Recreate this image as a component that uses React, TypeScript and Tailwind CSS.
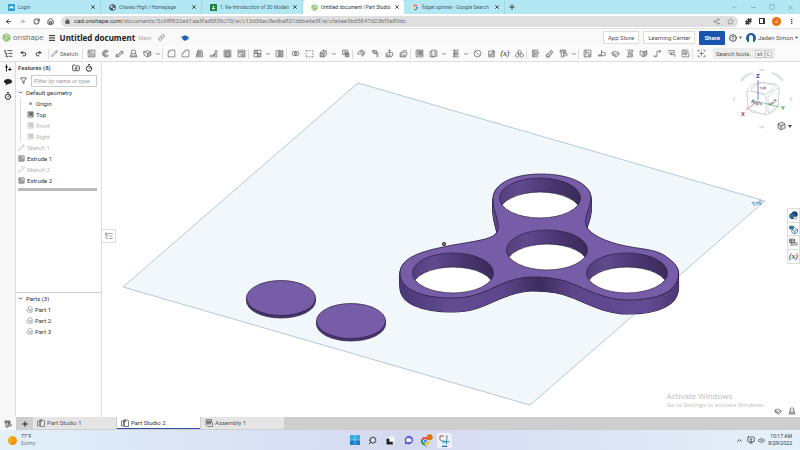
import React, { useState } from 'react';
import {
  ArrowLeft,
  ArrowRight,
  ChevronDown,
  ChevronUp,
  CircleHelp,
  Filter,
  FolderPlus,
  GraduationCap,
  House,
  Link,
  Lock,
  Menu,
  Minus,
  MoreVertical,
  Pencil,
  Plus,
  Puzzle,
  Redo2,
  RotateCw,
  Search,
  Share2,
  Square,
  Star,
  Timer,
  Undo2,
  X,
  Volume2,
  MonitorDown,
  MessageCircle,
} from 'lucide-react';

// Toolbar glyphs on a 16x16 grid: [outline, shaded area]
const glyphs: Record<string, [string, string]> = {
  extrude: ['M2 2h12v12H2zM5 5h6M2 5h3v9', 'M6 7h7v6H6z'],
  revolve: ['M13 4A6 6 0 1 0 13 12M13 4l-3 2M13 12l-3-2M10 6a3 3 0 1 0 0 4', 'M4 5l4-3 5 2-3 2-3 2 3 3-3 3-4-3z'],
  sweep: ['M2 14v-4h4c3 0 2-6 5-6h3v4h-3c-2 0-2 6-5 6z', 'M2 10h4v4H2zM11 4h3v4h-3z'],
  loft: ['M5 2h6l1 6 2 6H2l2-6zM4 8h8', 'M3 10h10l1 4H2z'],
  thicken: ['M1 5l6-2 7 2v6l-6 3-6-3zM1 5l7 3 6-3M8 8v6', 'M8 8l6-3v6l-6 3z'],
  fillet: ['M2 14V7c0-3 2-5 5-5h7v12z', 'M2 7c0-3 2-5 5-5v2C5 4 4 5 4 7z'],
  chamfer: ['M2 14V8l6-6h6v12z', 'M2 8l6-6 1 2-5 5z'],
  draft: ['M5 2h7l2 12H2zM4 6h9M3 10h10', 'M5 3h5l1 10H3z'],
  rib: ['M2 14h12V3h-3v4l-4 4H2zM7 11h4V7', 'M7 11l4-4v5H7z'],
  shell: ['M2 2h12v12H2zM5 5h6v9H5z', 'M3 3h10v10H3z'],
  hole: ['M2 2h12v12H2zM11 8a3 3 0 1 1-6 0 3 3 0 0 1 6 0M2 5h12', 'M8 8h6v6H8z'],
  pattern: ['M2 2h12v12H2zM2 8h12M8 2v12', 'M2 2h6v6H2zM8 8h6v6H8z'],
  mirror: ['M2 3h4v11H2zM10 3h4v11h-4zM8 1v14', 'M10 3h4v11h-4z'],
  boolean: ['M10 8a4 4 0 1 1-8 0 4 4 0 0 1 8 0M14 8a4 4 0 1 1-8 0 4 4 0 0 1 8 0', 'M8 4a5 5 0 0 1 0 8 5 5 0 0 1 0-8'],
  split: ['M2 5V3h3M7 3h3M12 3h2v2M14 7v3M14 12v2h-3M9 14H6M4 14H2v-3M2 9V7', ''],
  transform: ['M2 7h7v7H2zM9 7l4-3v7l-4 3M2 7l4-4h7M8 1v4', 'M2 7h7v7H2z'],
  wrap: ['M3 2h9v8H3zM5 5h5M5 7h5M8 7h6v7H8z', 'M8 7h6v7H8z'],
  surface: ['M1 9c3-8 9-8 13-3l-4 7c-2-4-5-5-9-4zM5 5c3 1 5 3 6 6', 'M5 5c4 0 6 3 6 6l3-5c-3-3-6-3-9-1z'],
  remove: ['M2 3h8l2 5H5zM9 9l5 5M14 9l-5 5', 'M2 3h8l2 5H5z'],
  moveFace: ['M2 8l4-2h7l1 5-3 3H2zM8 8V1M6 3l2-2 2 2', 'M2 9h9v5H2z'],
  replace: ['M2 8c3-4 7-6 12-5M2 8v6h10l2-5V6c-4-1-7 0-12 2', 'M2 9h10v5H2z'],
  offset: ['M2 2h12v12H2zM5 2v9h9M8 5h3v3H8z', 'M5 2h9v9H5z'],
  copy: ['M5 2h7l2 3v8H5zM5 4H2v10h8', 'M9 3h4v9H9z'],
  plane: ['M3 2h11M3 8h11M3 14h11M6 2v12', 'M5 3h8v4H5zM4 9h9v4H4z'],
  helix: ['M14 8A6 6 0 1 1 2 8a6 6 0 0 1 12 0M4 4l8 8', ''],
  curve: ['M3 4h10v10H3zM4 12c1-5 4-1 8-7M9 1l4 3-3 3', 'M4 12c2-5 4-1 8-7v8H4z'],
  composite: ['M8 2l3 2v3L8 9 5 7V4zM4 8l3 2v3l-3 2-3-2v-3zM12 8l3 2v3l-3 2-3-2v-3z', 'M5 4l3 2v3L5 7z'],
  sheet: ['M13 2H3v12h10M5 5h8v3H6v3h7', 'M3 2h3v12H3z'],
  bend: ['M2 12l4-4 5-6 3 3-4 6-5 3zM8 12a3 3 0 1 1-6 0 3 3 0 0 1 6 0', 'M8 6l3-3 2 3-3 4z'],
  flange: ['M2 2h10v4H8v8H4V6H2zM8 8h6v4h-6', 'M3 2h8v4H3z'],
  table: ['M2 2h12v12H2zM5 2v12M5 6h6M8 8l3 3', 'M9 8h5v6H9z'],
  hem: ['M2 12h10a3 3 0 0 0 0-6H8M8 2v10', 'M2 9h7v4H2z'],
  tab: ['M2 6l5-2 7 3-5 3zM2 6v4l7 4 5-4V7', 'M2 8l7 3v3l-7-4z'],
  form: ['M3 2h11v3H8v3h5v6H3M6 5v9', 'M8 9h5v4H8z'],
  corner: ['M2 3l5 2v9l-5-4zM14 3L9 5v9l5-4zM7 5h2', 'M9 5l5-2v7l-5 4z'],
  joint: ['M2 13h5V4h7M11 2l3 2-3 3M3 11l-1 2 2 2', ''],
  unfold: ['M2 3h11v4H2M5 10h9v4M8 7v3', ''],
  finish: ['M12 2H2v12h12V7M5 7l3 4 6-8', 'M3 3h8v7H3z'],
  custom: ['M2 5V2h3M11 2h3v3M14 11v3h-3M5 14H2v-3M8 4v8M4 8h8M8 1v1M8 14v1', ''],
  tree: ['M1 3h3M6 3h9M3 8h3M8 8h7M3 13h3M8 13h7M1 3l5 12', ''],
  list: ['M1 2h3v3H1zM6 3h9M3 8h3M8 8h7M3 13h3M8 13h7M2 5v8', ''],
  part: ['M2 9l3-2V3l5-2 4 3v10H5l-3-2zM5 7l4 2v4M9 9h5', ''],
  studio: ['M1 4h4v10H1zM7 2h6l2 2v11H7zM4 2h5v4', ''],
  assembly: ['M2 1h11v4l2 2v8H5l-3-3zM4 4h7v6H4zM11 4l4 3M4 7h7', 'M4 4h7v6H4z'],
};

const toolGroups: string[][] = [
  ['extrude', 'revolve', 'sweep', 'loft', 'thicken', 'v'],
  ['fillet', 'chamfer', 'draft', 'rib', 'shell', 'hole'],
  ['pattern', 'v', 'mirror'],
  ['boolean', 'split', 'transform', 'v', 'wrap'],
  ['surface', 'remove', 'moveFace', 'replace'],
  ['offset', 'copy', 'v', 'plane', 'v', 'helix', 'curve', 'variable', 'composite'],
  ['sheet', 'bend', 'flange', 'v'],
  ['table', 'hem', 'tab', 'form', 'corner', 'joint', 'unfold', 'finish'],
  ['custom'],
];

const Glyph: React.FC<{ name: string; className?: string }> = ({ name, className = 'size-[9px]' }) => (
  <svg viewBox="0 0 16 16" className={className} fill="none" stroke="currentColor" strokeWidth="1.3" aria-hidden="true">
    <path d={glyphs[name][1]} fill="currentColor" fillOpacity="0.45" stroke="none" />
    <path d={glyphs[name][0]} />
  </svg>
);

const browserTabs = [
  { title: 'Login', icon: 'login' },
  { title: 'Chaves High / Homepage', icon: 'globe' },
  { title: '1. Re-Introduction of 3D Modeli', icon: 'class' },
  { title: 'Untitled document | Part Studio', icon: 'onshape' },
  { title: 'fidget spinner - Google Search', icon: 'google' },
];

const OnshapeLogo: React.FC<{ className: string }> = ({ className }) => (
  <svg viewBox="0 0 16 16" className={className} fill="none" stroke="#6fb245" strokeWidth="1.5" aria-hidden="true">
    <path d="M8 1l6 3.5v7L8 15l-6-3.5v-7z" fill="#d6edc8" />
    <path d="M8 5l3 1.600v3.200L8 11.500 5 9.800V6.600zM2 4.500l5 2M14 11.500l-5-2M8 15v-4" />
  </svg>
);

const Favicon: React.FC<{ icon: string }> = ({ icon }) => {
  if (icon === 'onshape') return <OnshapeLogo className="size-[7px] shrink-0" />;
  return (
    <svg viewBox="0 0 16 16" className="size-[7px] shrink-0" aria-hidden="true">
      {icon === 'login' && (
        <>
          <rect width="16" height="16" rx="2" fill="#2a9fd0" />
          <path d="M3 11V7l5-3 5 3v4l-5-2z" fill="#dff4fc" />
        </>
      )}
      {icon === 'globe' && (
        <>
          <circle cx="8" cy="8" r="7.500" fill="#46565f" />
          <path d="M3 4l4-1 2 3-3 3-3-2zM9 8l5 1-3 5-2-2z" fill="#dcebf0" />
        </>
      )}
      {icon === 'class' && (
        <>
          <rect width="16" height="16" rx="1" fill="#188038" />
          <circle cx="8" cy="6" r="2" fill="#fff" />
          <path d="M4 12c0-4 8-4 8 0z" fill="#fff" />
        </>
      )}
      {icon === 'google' && (
        <g fill="none" strokeWidth="3">
          <circle cx="8" cy="8" r="8" fill="#fff" />
          <path d="M12 4.500A5 5 0 0 0 4 5" stroke="#ea4335" />
          <path d="M4 5a5 5 0 0 0 0 6" stroke="#fbbc05" />
          <path d="M4 11a5 5 0 0 0 7 1" stroke="#34a853" />
          <path d="M11 12a5 5 0 0 0 2-4H8" stroke="#4285f4" />
        </g>
      )}
    </svg>
  );
};

const BrowserChrome: React.FC = () => (
  <header>
    <div className="flex h-[14px] items-center bg-[#b3e7f4] text-[#41636e]">
      {browserTabs.map((tab) => {
        const active = tab.icon === 'onshape';
        return (
          <div
            key={tab.title}
            className={`flex h-full w-[101px] items-center gap-[3px] pr-1 pl-2 ${active ? 'rounded-t-[3px] bg-white text-[#333]' : 'border-r border-[#a1d5e2]'}`}
          >
            <Favicon icon={tab.icon} />
            <span className="flex-1 text-[5px] whitespace-nowrap">{tab.title}</span>
            <button aria-label={`Close ${tab.title}`}>
              <X className="size-[6px] text-[#222]" strokeWidth={3} />
            </button>
          </div>
        );
      })}
      <button aria-label="New tab" className="ml-[3px]">
        <Plus className="size-[8px] text-[#222]" strokeWidth={2.5} />
      </button>
      <div className="ml-auto flex gap-3 pr-[6px] text-[#668f9a]">
        <button aria-label="Tab search"><ChevronDown className="size-[7px]" /></button>
        <button aria-label="Minimize"><Minus className="size-[7px]" /></button>
        <button aria-label="Restore"><Square className="size-[6px]" /></button>
        <button aria-label="Close window"><X className="size-[7px]" /></button>
      </div>
    </div>
    <div className="flex h-[15px] items-center gap-[7px] border-b border-[#e2e2e2] bg-white px-[5px] text-[#333]">
      <button aria-label="Back"><ArrowLeft className="size-[7px]" strokeWidth={3} /></button>
      <button aria-label="Forward" className="text-[#999]"><ArrowRight className="size-[7px]" strokeWidth={2.5} /></button>
      <button aria-label="Reload"><RotateCw className="size-[7px]" strokeWidth={3} /></button>
      <button aria-label="Home"><House className="size-[7px]" strokeWidth={3} /></button>
      <div className="flex h-[11px] flex-1 items-center gap-1 rounded-full bg-[#dfdfdf] px-1 text-[#777]">
        <Lock className="size-[5px] fill-[#555] text-[#555]" strokeWidth={3} />
        <span className="flex-1 whitespace-nowrap">
          <span className="text-[#333]">cad.onshape.com</span>
          /documents/5c98f832e61aa3fad5f39c70/w/c13d36ec8edba831dbbe6e5f/e/cfa6ee3bd5847d23bf5a89dc
        </span>
        <button aria-label="Share page"><Share2 className="size-[7px]" /></button>
        <button aria-label="Bookmark" className="ml-[3px]"><Star className="size-[7px]" /></button>
      </div>
      <button aria-label="Extensions"><Puzzle className="size-[7px] fill-[#333]" /></button>
      <button aria-label="Side panel" className="size-[6px] border border-r-2 border-[#333]" />
      <button aria-label="Profile" className="size-[9px] rounded-full bg-[#e8710a] text-[5px] leading-[9px] text-white">J</button>
      <button aria-label="More"><MoreVertical className="size-[7px]" strokeWidth={3} /></button>
    </div>
  </header>
);

const Caret: React.FC = () => (
  <svg viewBox="0 0 8 8" className="size-[3px]" aria-hidden="true"><path d="M0 2h8L4 7z" fill="#444" /></svg>
);

const DocumentHeader: React.FC = () => (
  <div className="flex h-[17px] items-center bg-[#f9f9f9] px-[2px] text-[#555]">
    <OnshapeLogo className="size-[9px]" />
    <span className="ml-[2px] text-[8px] text-[#777]">onshape</span>
    <button aria-label="Main menu" className="mr-1 ml-[4px]"><Menu className="size-[8px] text-[#222]" strokeWidth={3} /></button>
    <h1 className="font-['Noto_Sans',sans-serif] text-[8px] font-bold text-[#222]">Untitled document</h1>
    <span className="ml-[3px] text-[6px] text-[#aaa]">Main</span>
    <button aria-label="Copy link" className="ml-[7px]"><Link className="size-[7px]" /></button>
    <GraduationCap className="ml-4 size-[8px] fill-[#1b5faa] text-[#1b5faa]" />
    <div className="ml-auto flex items-center gap-1">
      <button className="h-[13px] rounded-[1px] border border-[#ddd] bg-white px-1">App Store</button>
      <button className="h-[13px] rounded-[1px] border border-[#ddd] bg-white px-1">Learning Center</button>
      <button className="h-[14px] rounded-[1px] bg-[#1b54b0] px-[5px] font-bold text-white">Share</button>
      <button aria-label="Help" className="flex items-center gap-[2px]">
        <CircleHelp className="size-[8px]" strokeWidth={3} />
        <Caret />
      </button>
      <button className="flex items-center gap-[2px] whitespace-nowrap">
        <svg viewBox="0 0 20 20" className="size-[10px]" aria-hidden="true">
          <circle cx="10" cy="10" r="10" fill="#1c5ea8" />
          <path d="M6 20V9c0-7 8-7 8 0v11z" fill="#fff" />
        </svg>
        Jaden Simon
        <Caret />
      </button>
    </div>
  </div>
);

const Toolbar: React.FC = () => (
  <div className="flex h-[16px] items-center border-b border-[#ddd] bg-[#fbfbfb] text-[#666]">
    <button aria-label="Feature list" className="flex w-4 justify-center text-[#222]"><Glyph name="tree" /></button>
    <button aria-label="Undo" className="flex w-[15px] justify-center"><Undo2 className="size-[7px] text-[#222]" strokeWidth={3} /></button>
    <button aria-label="Redo" className="flex w-[15px] justify-center"><Redo2 className="size-[7px] text-[#222]" strokeWidth={3} /></button>
    <div className="mx-[2px] h-[10px] w-px bg-[#ddd]" />
    <button className="flex w-[31px] items-center gap-[2px]"><Pencil className="size-[7px]" />Sketch</button>
    {toolGroups.map((group, g) => (
      <div key={g} className="flex items-center">
        <div className="mr-px h-[10px] w-px bg-[#ddd]" />
        {group.map((tool, i) => {
          if (tool === 'v') {
            return <button key={i} aria-label="More tools" className="flex w-2 justify-center"><ChevronDown className="size-[6px]" strokeWidth={3} /></button>;
          }
          return (
            <button key={i} aria-label={tool} className="flex w-[14px] justify-center">
              {tool === 'variable' ? <i className="font-['Liberation_Serif',serif] text-[8px] font-bold">(x)</i> : <Glyph name={tool} />}
            </button>
          );
        })}
      </div>
    ))}
    <label className="ml-[5px] flex h-[11px] items-center gap-1 bg-[#ececec] px-[3px]">
      <input type="text" aria-label="Search tools" placeholder="Search tools..." className="w-[35px] bg-transparent outline-none placeholder:text-[#555]" />
      <kbd className="border border-[#ccc] bg-[#f4f4f4] px-px font-['Roboto',sans-serif] text-[5px] leading-[6px]">alt</kbd>
      <kbd className="-ml-1 border border-[#ccc] bg-[#f4f4f4] px-px font-['Roboto',sans-serif] text-[5px] leading-[6px]">C</kbd>
    </label>
  </div>
);

const features = [
  { name: 'Origin', icon: 'origin', nested: true, hidden: false },
  { name: 'Top', icon: 'offset', nested: true, hidden: false },
  { name: 'Front', icon: 'offset', nested: true, hidden: true },
  { name: 'Right', icon: 'offset', nested: true, hidden: true },
  { name: 'Sketch 1', icon: 'sketch', nested: false, hidden: true },
  { name: 'Extrude 1', icon: 'extrude', nested: false, hidden: false },
  { name: 'Sketch 2', icon: 'sketch', nested: false, hidden: true },
  { name: 'Extrude 2', icon: 'extrude', nested: false, hidden: false },
];

const FeaturePanel: React.FC = () => {
  const [filter, setFilter] = useState('');

  const visible = features.filter((f) => f.name.toLowerCase().includes(filter.toLowerCase()));

  return (
    <aside className="flex w-[86px] shrink-0 flex-col border-r border-[#ddd] bg-white text-[#333]">
      <div className="flex flex-1 flex-col border-b border-[#ccc]">
        <div className="flex h-[12px] items-center pr-2 pl-[2px]">
          <span className="flex-1 font-bold text-[#555]">Features (8)</span>
          <button aria-label="Add folder"><FolderPlus className="size-[8px]" strokeWidth={2.5} /></button>
          <button aria-label="Rebuild times" className="ml-[5px]"><Timer className="size-[8px]" strokeWidth={3} /></button>
        </div>
        <div className="flex h-[13px] items-center gap-1 pr-1 pl-[4px]">
          <Filter className="size-[7px]" strokeWidth={2.5} />
          <input
            type="text"
            aria-label="Filter by name or type"
            placeholder="Filter by name or type"
            value={filter}
            onChange={(e) => setFilter(e.target.value)}
            className="h-[12px] min-w-0 flex-1 border border-[#ccc] px-[2px] outline-none placeholder:text-[#999] placeholder:italic"
          />
        </div>
        <button className="flex h-[11px] items-center gap-[3px] pl-[2px]">
          <ChevronDown className="size-[5px]" strokeWidth={4} />
          Default geometry
        </button>
        <ul>
          {visible.map((f) => (
            <li
              key={f.name}
              className={`flex h-[11px] items-center gap-[2px] ${f.nested ? 'ml-[4px] border-l border-[#ddd] pl-[6px]' : 'pl-[2px]'} ${f.hidden ? 'text-[#b5b5b5]' : ''}`}
            >
              {f.icon === 'origin' && <span className="mx-[2px] size-[3px] rounded-full bg-[#999]" />}
              {f.icon === 'sketch' && <Pencil className="size-[7px]" />}
              {f.icon !== 'origin' && f.icon !== 'sketch' && <Glyph name={f.icon} className="size-[7px]" />}
              {f.name}
            </li>
          ))}
        </ul>
        <div className="mt-[2px] mr-1 ml-[2px] h-[3px] bg-[#bbb]" />
      </div>
      <div className="h-[124px]">
        <button className="flex h-[11px] items-center gap-[3px] pl-[2px]">
          <ChevronDown className="size-[5px]" strokeWidth={4} />
          Parts (3)
        </button>
        <ul>
          {['Part 1', 'Part 2', 'Part 3'].map((part) => (
            <li key={part} className="flex h-[11px] items-center gap-[2px] pl-[10px]">
              <Glyph name="part" className="size-[7px] text-[#777]" />
              {part}
            </li>
          ))}
        </ul>
      </div>
    </aside>
  );
};

// Top face outline of the spinner, the walls are the same outline pushed down
const SPINNER =
  'M400 273C400 257 424 251 443 247C466 242 484 241 493 236C501 231 498 223 496 215C494 208 493 204 493 198C494 183 514 174 541 174C570 174 591 184 591 198C591 206 586 213 585.500 221C585 232 600 239 617 244C640 250 657 248 668 258C675 263 679 268 678.500 274C678 292 657 300 628 300C605 300 586 289 573 284C562 279 548 277 533 277C519 277 508 281 495 287C482 293 471 298 453 298C420 298 400 289 400 273Z';
const holes = [
  { id: 'top', cx: 540, cy: 198 },
  { id: 'mid', cx: 547, cy: 250 },
  { id: 'left', cx: 453, cy: 273 },
  { id: 'right', cx: 627, cy: 273 },
];
const walls = [14, 12, 10, 8, 6, 4, 2, 1];

const Scene: React.FC = () => (
  <svg viewBox="102 62 698 355" className="absolute inset-0 size-full" role="img" aria-label="Fidget spinner model">
    <defs>
      <linearGradient id="wall" gradientUnits="userSpaceOnUse" x1="400" y1="0" x2="679" y2="0">
        <stop offset="0" stopColor="#4b3875" />
        <stop offset="0.190" stopColor="#644c94" />
        <stop offset="0.370" stopColor="#5c458a" />
        <stop offset="0.500" stopColor="#3b2c5c" />
        <stop offset="0.620" stopColor="#5c458a" />
        <stop offset="0.880" stopColor="#644c94" />
        <stop offset="1" stopColor="#4b3875" />
      </linearGradient>
      <linearGradient id="bore">
        <stop offset="0" stopColor="#54407c" />
        <stop offset="0.250" stopColor="#5f4a8e" />
        <stop offset="0.650" stopColor="#49366f" />
        <stop offset="1" stopColor="#3a2b59" />
      </linearGradient>
      {holes.map((h) => (
        <clipPath id={h.id} key={h.id}>
          <ellipse cx={h.cx} cy={h.cy} rx="40.500" ry="20" />
        </clipPath>
      ))}
    </defs>
    <path d="M358 83L765 201L530 405L123 287Z" fill="#f2f7fb" stroke="#b3c9da" strokeWidth="1" />
    <text x="753" y="207" fontSize="6" fill="#2f6195" transform="rotate(-24 753 207)">Top</text>

    {[[281, 298], [351, 321]].map(([x, y]) => (
      <g key={x} stroke="#2b2044" strokeWidth="0.700">
        <path d={`M${x - 34.5} ${y}v3a34.500 17 0 0 0 69 0v-3z`} fill="#46346b" />
        <ellipse cx={x} cy={y} rx="34.500" ry="17.500" fill="#775da8" />
      </g>
    ))}

    {walls.map((dy) => (
      <path key={dy} d={SPINNER} transform={`translate(0 ${dy})`} fill="none" stroke="#2b2044" strokeWidth="1.200" />
    ))}
    {walls.map((dy) => (
      <path key={dy} d={SPINNER} transform={`translate(0 ${dy})`} fill="url(#wall)" />
    ))}
    <path d={SPINNER} fill="#775da8" stroke="#2b2044" strokeWidth="0.800" />
    {holes.map((h) => (
      <g key={h.id}>
        <ellipse cx={h.cx} cy={h.cy} rx="40.500" ry="20" fill="url(#bore)" />
        <ellipse cx={h.cx} cy={h.cy + 14} rx="40.500" ry="20" fill="#fff" stroke="#2b2044" strokeWidth="0.700" clipPath={`url(#${h.id})`} />
        <ellipse cx={h.cx} cy={h.cy} rx="40.500" ry="20" fill="none" stroke="#2b2044" strokeWidth="0.700" />
      </g>
    ))}
    <circle cx="444" cy="244" r="1.700" fill="#777" stroke="#222" strokeWidth="0.800" />

    {/* View cube */}
    <g fill="#dfe3e6">
      <path d="M762 68l4 3h-8zM762 129l4-3h-8zM732 99l3-3v6zM793 99l-3-3v6z" />
      <path d="M740 80q5-7 12-8l1 2q-7 2-11 8zM784 80q-5-7-12-8l-1 2q7 2 11 8z" />
    </g>
    <g fill="#fff" stroke="#d3d8dc" strokeWidth="1" strokeLinejoin="round">
      <path d="M747 90L751 86L760 82L775 84L779 87L778 106L774 111L767 115L752 112L748 109Z" />
      <path d="M751 89L760 83L776 85L770 92L766 94L752 91Z" />
      <path d="M747 92L750 91L764 95L766 97V113L763 114L750 110L748 108Z" />
      <path d="M768 97L777 88L779 89L778 105L769 113L768 112Z" />
    </g>
    <path d="M758 100V80" stroke="#5c62c4" strokeWidth="0.800" />
    <path d="M758 101l-12 9" stroke="#d37777" strokeWidth="0.800" />
    <path d="M764 103l15 4" stroke="#74bf7c" strokeWidth="0.800" />
    <g fontSize="6" fontWeight="bold">
      <text x="756" y="78" fill="#4146b5">Z</text>
      <text x="741" y="116" fill="#cf3434">X</text>
      <text x="781" y="110" fill="#35a845">Y</text>
    </g>
    <g fontSize="4" fill="#333">
      <text x="751" y="103" fontSize="5" transform="rotate(12 751 103)">Right</text>
      <text x="770" y="106" transform="rotate(-38 770 106)">Back</text>
      <text x="760" y="90" transform="rotate(-14 760 90)">Top</text>
    </g>
    <g stroke="#555" strokeWidth="0.700">
      <path d="M778 124l4-2 3 2v4l-4 2-3-2z" fill="#ddd" />
      <path d="M778 124l3 2 4-2M781 126v4" fill="none" />
      <path d="M788 125h4l-2 3z" fill="#444" stroke="none" />
    </g>
  </svg>
);

const SideTools: React.FC = () => (
  <div className="absolute top-[146px] right-0 flex w-[13px] flex-col border border-[#ddd] bg-white text-[#555]">
    <button aria-label="Appearance" className="flex h-[14px] items-center justify-center border-b border-[#ddd]">
      <svg viewBox="0 0 16 16" className="size-[9px]" stroke="#23415e" aria-hidden="true">
        <circle cx="10" cy="6" r="5" fill="#174a7c" />
        <circle cx="6" cy="9" r="5" fill="#2f6799" />
        <path d="M8 10h6v3l-3 2-3-2z" fill="#eee" stroke="#777" />
      </svg>
    </button>
    <button aria-label="Configurations" className="flex h-[13px] items-center justify-center border-b border-[#ddd]">
      <svg viewBox="0 0 16 16" className="size-[9px]" fill="none" stroke="#39709e" strokeWidth="1.400" aria-hidden="true">
        <path d="M1 2h7v5H1z" fill="#39709e" />
        <path d="M10 5l5 3v5l-5 3-5-3V8zM5 8l5 3 5-3M10 11v5" fill="#fff" />
      </svg>
    </button>
    <button aria-label="Custom tables" className="flex h-[14px] items-center justify-center border-b border-[#ddd]">
      <svg viewBox="0 0 16 16" className="size-[9px]" fill="none" stroke="#555" strokeWidth="1.500" aria-hidden="true">
        <path d="M1 2h9v6H1zM1 5h9M4 2v12M7 9v5M13 8c2 2 2 4 0 6M9 9h3M9 12h3" />
      </svg>
    </button>
    <button aria-label="Variables" className="flex h-[13px] items-center justify-center font-['Liberation_Serif',serif] text-[8px] font-bold italic">(x)</button>
  </div>
);

const DocumentTabs: React.FC = () => {
  const [active, setActive] = useState('Part Studio 2');

  return (
    <nav className="flex h-[13px] items-stretch bg-[#cecece] text-[#555]">
      <button aria-label="Tab manager" className="flex w-4 items-center justify-center bg-[#f7f7f7] text-[#222]"><Glyph name="flange" className="size-[8px]" /></button>
      <button aria-label="Add tab" className="flex w-[17px] items-center justify-center"><Plus className="size-[8px] text-[#222]" strokeWidth={3} /></button>
      {['Part Studio 1', 'Part Studio 2', 'Assembly 1'].map((tab) => (
        <button
          key={tab}
          onClick={() => setActive(tab)}
          className={`mr-px mb-px flex w-[83px] items-center gap-[2px] pl-1 ${active === tab ? 'border-b border-[#2d4fae] bg-white text-[#333]' : 'bg-[#e5e5e5]'}`}
        >
          <Glyph name={tab === 'Assembly 1' ? 'assembly' : 'studio'} className="size-[8px]" />
          {tab}
        </button>
      ))}
    </nav>
  );
};

const Taskbar: React.FC = () => (
  <footer className="grid h-[20px] grid-cols-3 items-center bg-linear-to-r from-[#e2f0fa] via-[#d5d9f0] to-[#e5f1fa] px-2 font-['Open_Sans',sans-serif] text-[#333]">
    <div className="flex items-center gap-1">
      <span className="size-[9px] rounded-full bg-linear-to-br from-[#fbbd23] to-[#ee820b]" />
      <span className="text-[5px] leading-[7px]">77°F<br /><span className="text-[#666]">Sunny</span></span>
    </div>
    <div className="flex items-center justify-center gap-[3px]">
      <button aria-label="Start" className="flex size-[15px] items-center justify-center">
        <svg viewBox="0 0 16 16" className="size-[10px]" aria-hidden="true">
          <path d="M0 0h7.600v7.600H0zM8.400 0H16v7.600H8.400z" fill="#32abe0" />
          <path d="M0 8.400h7.600V16H0zM8.400 8.400H16V16H8.400z" fill="#1483cb" />
        </svg>
      </button>
      <button aria-label="Search" className="flex size-[15px] items-center justify-center"><Search className="size-[9px] -scale-x-100" strokeWidth={2.5} /></button>
      <button aria-label="Task view" className="flex size-[15px] items-center justify-center">
        <svg viewBox="0 0 16 16" className="size-[9px]" aria-hidden="true">
          <path d="M5 1h10v10H5z" fill="#f5f5f5" />
          <path d="M1 5h5v5h6v5H1z" fill="#222" />
        </svg>
      </button>
      <button aria-label="Chat" className="flex size-[15px] items-center justify-center">
        <svg viewBox="0 0 16 16" className="size-[10px]" aria-hidden="true">
          <path d="M8 1a7 7 0 1 1-4 13l-3 1 1-4A7 7 0 0 1 8 1z" fill="#5b5fc7" />
          <path d="M4 5h6v2l2-1v5l-2-1v1H4z" fill="#fff" />
        </svg>
      </button>
      <button aria-label="Chrome" className="flex size-[15px] items-center justify-center">
        <svg viewBox="0 0 20 20" className="size-[13px]" aria-hidden="true">
          <path d="M8 11L2 8a7 7 0 0 1 12 0z" fill="#db4437" />
          <path d="M8 11L2 8a7 7 0 0 0 6 10z" fill="#2b9c51" />
          <path d="M8 11h7a7 7 0 0 1-7 7z" fill="#f5bf24" />
          <circle cx="8" cy="11" r="3" fill="#4285f4" stroke="#fff" />
          <circle cx="15" cy="5" r="4.500" fill="#e8710a" />
          <path d="M8 19.500h3" stroke="#4a67c4" />
        </svg>
      </button>
      <button aria-label="Snipping tool" className="flex size-[15px] items-center justify-center rounded-[2px] bg-[#eef1fa]">
        <svg viewBox="0 0 20 20" className="size-[13px]" fill="none" strokeWidth="1.500" aria-hidden="true">
          <path d="M3 9V3h6" stroke="#b05340" />
          <path d="M12 3h2v5M3 9l6 3" stroke="#6f7c88" />
          <path d="M9 12h9M13 8v8" stroke="#2386c8" />
          <circle cx="9" cy="12" r="1.500" stroke="#3c9bd3" />
          <path d="M6 19h8" stroke="#1975bd" strokeWidth="2" />
        </svg>
      </button>
    </div>
    <div className="flex items-center justify-end gap-[3px]">
      <button aria-label="Hidden icons"><ChevronUp className="size-[7px]" strokeWidth={3} /></button>
      <MonitorDown className="ml-px size-[8px]" />
      <Volume2 className="size-[7px]" />
      <span className="text-right text-[5px] leading-[7px] text-[#222]">10:17 AM<br />8/29/2022</span>
    </div>
  </footer>
);

const App: React.FC = () => {
  return (
    <div className="flex min-h-screen flex-col bg-white font-['Roboto',sans-serif] text-[6px] leading-[8px]">
      <BrowserChrome />
      <DocumentHeader />
      <Toolbar />
      <main className="flex flex-1">
        <div className="flex w-4 shrink-0 flex-col items-center gap-[6px] border-r border-[#ddd] bg-[#f8f8f8] pt-[2px] text-[#222]">
          <button aria-label="Insert">
            <svg viewBox="0 0 16 16" className="size-[8px]" fill="none" stroke="currentColor" strokeWidth="2" aria-hidden="true">
              <path d="M5 1v14M2 6h6M12 7v7M8 11h7" />
            </svg>
          </button>
          <button aria-label="Comments">
            <svg viewBox="0 0 16 16" className="size-[8px]" fill="currentColor" aria-hidden="true">
              <path d="M8 2c5 0 8 2 8 5s-3 5-8 5l-5 3 1-4C1 10 0 9 0 7c0-3 3-5 8-5z" />
            </svg>
          </button>
          <button aria-label="History"><Timer className="size-[8px]" strokeWidth={3} /></button>
        </div>
        <FeaturePanel />
        <section className="relative flex-1 overflow-hidden">
          <Scene />
          <button aria-label="Toggle list" className="absolute top-[167px] left-0 flex size-[14px] items-center justify-center border border-l-0 border-[#ddd] bg-white text-[#777]">
            <Glyph name="list" className="size-[8px]" />
          </button>
          <SideTools />
          <div className="absolute right-[35px] bottom-[8px] font-['Open_Sans',sans-serif] text-[#bdbdbd]">
            <p className="text-[8px] leading-[10px]">Activate Windows</p>
            <p>Go to Settings to activate Windows.</p>
          </div>
          <div className="absolute right-1 bottom-[2px] flex gap-[6px] text-[#555]">
            <button aria-label="Measure"><Glyph name="tab" className="size-[8px]" /></button>
            <button aria-label="Mass properties"><Glyph name="loft" className="size-[8px]" /></button>
          </div>
        </section>
      </main>
      <DocumentTabs />
      <Taskbar />
    </div>
  );
};

export default App;
